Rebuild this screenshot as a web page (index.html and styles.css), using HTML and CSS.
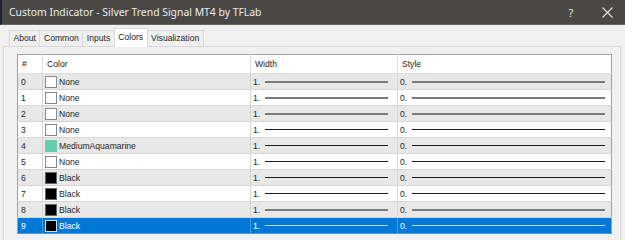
FILE: index.html
```html
<!DOCTYPE html>
<html lang="en">
<head>
    <meta charset="UTF-8">
    <title>Custom Indicator</title>
    <link rel="stylesheet" href="styles.css">
</head>
<body>
    <div class="window">
        <!-- Barra de título -->
        <div class="titlebar">
            <span class="title">Custom Indicator - Silver Trend Signal MT4 by TFLab</span>
            <span class="help">?</span>
            <span class="close">
                <svg width="11" height="11" viewBox="0 0 11 11"><path d="M0.5 0.5 L10.5 10.5 M10.5 0.5 L0.5 10.5" stroke="#e6e6e6" stroke-width="1.1"/></svg>
            </span>
        </div>

        <!-- Pestañas -->
        <div class="tabs">
            <span class="tab">About</span>
            <span class="tab">Common</span>
            <span class="tab">Inputs</span>
            <span class="tab active">Colors</span>
            <span class="tab">Visualization</span>
        </div>

        <div class="panel">
            <table class="grid">
                <colgroup>
                    <col class="c-num">
                    <col class="c-color">
                    <col class="c-width">
                    <col class="c-style">
                </colgroup>
                <thead>
                    <tr>
                        <th>#</th>
                        <th>Color</th>
                        <th>Width</th>
                        <th>Style</th>
                    </tr>
                </thead>
                <tbody>
                    <tr class="gray none">
                        <td>0</td>
                        <td><div class="color"><span class="swatch"></span>None</div></td>
                        <td><div class="sample w">1.<span class="line"></span></div></td>
                        <td><div class="sample s">0.<span class="line"></span></div></td>
                    </tr>
                    <tr class="none">
                        <td>1</td>
                        <td><div class="color"><span class="swatch"></span>None</div></td>
                        <td><div class="sample w">1.<span class="line"></span></div></td>
                        <td><div class="sample s">0.<span class="line"></span></div></td>
                    </tr>
                    <tr class="gray none">
                        <td>2</td>
                        <td><div class="color"><span class="swatch"></span>None</div></td>
                        <td><div class="sample w">1.<span class="line"></span></div></td>
                        <td><div class="sample s">0.<span class="line"></span></div></td>
                    </tr>
                    <tr>
                        <td>3</td>
                        <td><div class="color"><span class="swatch"></span>None</div></td>
                        <td><div class="sample w">1.<span class="line"></span></div></td>
                        <td><div class="sample s">0.<span class="line"></span></div></td>
                    </tr>
                    <tr class="gray">
                        <td>4</td>
                        <td><div class="color"><span class="swatch aqua"></span>MediumAquamarine</div></td>
                        <td><div class="sample w">1.<span class="line"></span></div></td>
                        <td><div class="sample s">0.<span class="line"></span></div></td>
                    </tr>
                    <tr>
                        <td>5</td>
                        <td><div class="color"><span class="swatch"></span>None</div></td>
                        <td><div class="sample w">1.<span class="line"></span></div></td>
                        <td><div class="sample s">0.<span class="line"></span></div></td>
                    </tr>
                    <tr class="gray">
                        <td>6</td>
                        <td><div class="color"><span class="swatch black"></span>Black</div></td>
                        <td><div class="sample w">1.<span class="line"></span></div></td>
                        <td><div class="sample s">0.<span class="line"></span></div></td>
                    </tr>
                    <tr>
                        <td>7</td>
                        <td><div class="color"><span class="swatch black"></span>Black</div></td>
                        <td><div class="sample w">1.<span class="line"></span></div></td>
                        <td><div class="sample s">0.<span class="line"></span></div></td>
                    </tr>
                    <tr class="gray none">
                        <td>8</td>
                        <td><div class="color"><span class="swatch black"></span>Black</div></td>
                        <td><div class="sample w">1.<span class="line"></span></div></td>
                        <td><div class="sample s">0.<span class="line"></span></div></td>
                    </tr>
                    <tr class="selected">
                        <td>9</td>
                        <td><div class="color"><span class="swatch black"></span>Black</div></td>
                        <td><div class="sample w">1.<span class="line"></span></div></td>
                        <td><div class="sample s">0.<span class="line"></span></div></td>
                    </tr>
                </tbody>
            </table>
        </div>
    </div>
</body>
</html>
```

FILE: styles.css
```css
/* Estilos generales */
body {
    margin: 0;
    padding: 0;
    width: 625px;
    height: 240px;
    overflow: hidden;
    background-color: #f0f0f0;
    font-family: "Liberation Sans", Arial, sans-serif;
    color: #1e1e1e;
}

.window {
    display: flex;
    flex-direction: column;
    height: 240px;
}

/* Barra de título */
.titlebar {
    display: flex;
    align-items: center;
    flex: none;
    height: 24px;
    background-color: #4a4845;
    border-left: 2px solid #1c2333;
    border-bottom: 1px solid #6a6865;
    color: #ececec;
    font-family: "Noto Sans", sans-serif;
    font-size: 10.4px;
}

.titlebar .title {
    flex: 1;
    padding-left: 7px;
}

.titlebar .help {
    width: 36px;
    text-align: center;
    font-size: 11px;
}

.titlebar .close {
    display: flex;
    justify-content: center;
    width: 36px;
}

/* Pestañas */
.tabs {
    display: flex;
    align-items: flex-end;
    flex: none;
    height: 21px;
    padding-left: 9px;
    font-size: 8.6px;
}

.tab {
    height: 15px;
    line-height: 15px;
    padding: 0 3.5px;
    border: 1px solid #d9d9d9;
    border-bottom: none;
    border-right: none;
    background-color: #f0f0f0;
}

.tab:last-child {
    border-right: 1px solid #d9d9d9;
}

.tab.active {
    height: 18px;
    line-height: 16px;
    margin-bottom: -1px;
    background-color: #ffffff;
    border-right: 1px solid #d9d9d9;
    position: relative;
}

.tab.active + .tab {
    border-left: none;
}

/* Panel */
.panel {
    flex: 1;
    margin-left: 3px;
    margin-right: 4px;
    border: 1px solid #d9d9d9;
    border-bottom: none;
    padding: 7px 8px 0 13px;
    overflow: hidden;
}

/* Tabla de colores */
.grid {
    width: 595px;
    border-collapse: collapse;
    table-layout: fixed;
    background-color: #ffffff;
    border: 1px solid #a0a0a0;
    border-bottom: none;
    font-size: 8.6px;
}

.c-num { width: 25px; }
.c-color { width: 208px; }
.c-width { width: 147px; }
.c-style { width: 214px; }

.grid th {
    height: 18px;
    padding: 0 0 0 4px;
    text-align: left;
    font-weight: normal;
    border-left: 1px solid #e0e0e0;
    border-bottom: 1px solid #dedede;
}

.grid td {
    height: 15px;
    padding: 0 0 0 3px;
    border-left: 1px solid #d6d6d6;
    border-bottom: 1px solid #d6d6d6;
    white-space: nowrap;
}

.grid td:first-child,
.grid th:first-child {
    border-left: none;
}

.grid tr.gray td {
    background-color: #e8e8e8;
}

.grid tr.selected td {
    background-color: #0078d7;
    color: #ffffff;
    border-color: #4a9be0;
}

.color {
    display: flex;
    align-items: center;
    gap: 2px;
    margin-left: -1px;
}

.swatch {
    width: 10px;
    height: 10px;
    border: 1px solid #8a8a8a;
    background-color: #ffffff;
}

.swatch.aqua {
    background-color: #66cdaa;
    border-color: #66cdaa;
}

.swatch.black {
    background-color: #000000;
    border-color: #666666;
}

.selected .swatch.black {
    border-color: #c8dcf0;
}

.sample {
    display: flex;
    align-items: center;
    gap: 5px;
    margin-left: -1px;
}

.sample .line {
    flex: 1;
    border-top: 1px solid #1e1e1e;
}

.sample.w .line { margin-right: 9px; }
.sample.s .line { margin-right: 6px; }

.none .sample .line {
    border-top: 2px solid #7a7a7a;
}

.selected .sample .line {
    border-top: 1px solid #b8d6f2;
}
```
